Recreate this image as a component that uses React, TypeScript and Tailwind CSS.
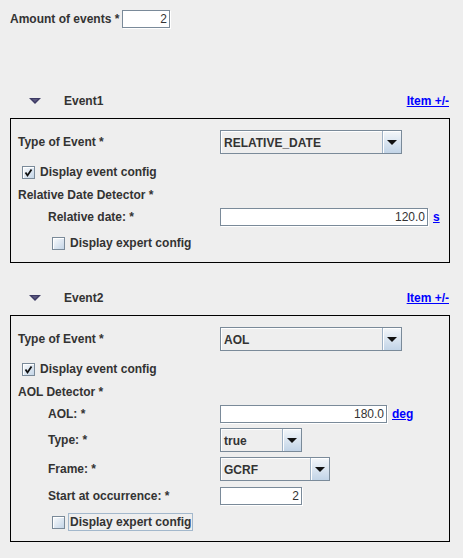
import React from 'react';

function TextField({ className, value }: { className: string; value: string }) {
  return (
    <div
      className={`flex h-[18px] items-center justify-end border border-[#7a8a99] bg-white pr-[2px] font-normal shadow-[1px_1px_0_#ffffff] ${className}`}
    >
      {value}
    </div>
  );
}

function Combo({ className, value }: { className: string; value: string }) {
  return (
    <div className={`flex h-[24px] border border-[#7a8a99] ${className}`}>
      <div className="flex flex-1 items-center border-t border-l border-white bg-[#eeeeee] pl-[2px]">
        {value}
      </div>
      <div className="flex w-[19px] items-center justify-center border-l border-[#9eb1c5] bg-gradient-to-b from-[#f4f7fa] to-[#c2d4e7] shadow-[inset_1px_1px_0_#ffffff]">
        <svg width="10" height="5" viewBox="0 0 10 5">
          <polygon points="0,0 10,0 5,5" fill="#111111" />
        </svg>
      </div>
    </div>
  );
}

function CheckBox({ checked }: { checked?: boolean }) {
  return (
    <div className="flex h-[13px] w-[13px] items-center justify-center border border-[#7a8a99] bg-gradient-to-br from-[#fbfcfd] to-[#c4d5e7] shadow-[inset_1px_1px_0_#ffffff]">
      {checked && (
        <svg width="11" height="11" viewBox="0 0 11 11">
          <path d="M2.5 5.5 L4.5 8.5 L8.5 2.5" stroke="#111111" strokeWidth="1.8" fill="none" />
        </svg>
      )}
    </div>
  );
}

function Header({ title }: { title: string }) {
  return (
    <div className="flex h-[18px] items-center pr-[14px]">
      <div className="ml-[29px] flex w-[35px]">
        <svg width="12" height="6" viewBox="0 0 12 6">
          <polygon points="0,0 12,0 6,6" fill="#3d3a64" />
          <polygon points="3,1 9,1 6,4" fill="#5a577f" />
        </svg>
      </div>
      <span>{title}</span>
      <span className="ml-auto text-[#0000ff] underline">Item +/-</span>
    </div>
  );
}

function Row({
  label,
  indent,
  height,
  className = '',
  children,
}: {
  label: string;
  indent?: boolean;
  height: string;
  className?: string;
  children?: React.ReactNode;
}) {
  return (
    <div className={`flex items-center pl-[7px] ${height} ${className}`}>
      <div className={`w-[202px] ${indent ? 'pl-[30px]' : ''}`}>{label}</div>
      {children}
    </div>
  );
}

function CheckRow({
  label,
  checked,
  indent,
  focused,
}: {
  label: string;
  checked?: boolean;
  indent?: boolean;
  focused?: boolean;
}) {
  return (
    <div className={`flex h-[20px] items-center ${indent ? 'pl-[41px]' : 'pl-[11px]'}`}>
      <CheckBox checked={checked} />
      <span
        className={`ml-[3px] border px-[1px] leading-[16px] ${
          focused ? 'border-[#a3b8cc]' : 'border-transparent'
        }`}
      >
        {label}
      </span>
    </div>
  );
}

export default function App() {
  return (
    <div className="h-[558px] w-[463px] overflow-hidden bg-[#eeeeee] font-['Liberation_Sans',Arial,sans-serif] text-[12px] font-bold text-[#333333]">
      <div className="flex items-center pt-[10px] pl-[10px]">
        <span className="w-[112px]">Amount of events *</span>
        <TextField className="w-[48px]" value="2" />
      </div>

      <div className="mt-[64px]">
        <Header title="Event1" />
      </div>
      <div className="mx-[10px] mt-[8px] w-[440px] border border-black pb-[9px]">
        <Row label="Type of Event *" height="h-[24px]" className="mt-[11px]">
          <Combo className="w-[182px]" value="RELATIVE_DATE" />
        </Row>
        <div className="mt-[7px] flex h-[22px] items-center">
          <CheckRow label="Display event config" checked />
        </div>
        <Row label="Relative Date Detector *" height="h-[24px]" />
        <Row label="Relative date: *" indent height="h-[19px]">
          <TextField className="w-[208px]" value="120.0" />
          <span className="ml-[5px] text-[#0000ff] underline">s</span>
        </Row>
        <div className="mt-[7px]">
          <CheckRow label="Display expert config" indent />
        </div>
      </div>

      <div className="mt-[26px]">
        <Header title="Event2" />
      </div>
      <div className="mx-[10px] mt-[8px] w-[440px] border border-black pb-[9px]">
        <Row label="Type of Event *" height="h-[24px]" className="mt-[11px]">
          <Combo className="w-[182px]" value="AOL" />
        </Row>
        <div className="mt-[7px] flex h-[22px] items-center">
          <CheckRow label="Display event config" checked />
        </div>
        <Row label="AOL Detector *" height="h-[24px]" />
        <Row label="AOL: *" indent height="h-[19px]">
          <TextField className="w-[167px]" value="180.0" />
          <span className="ml-[5px] text-[#0000ff] underline">deg</span>
        </Row>
        <Row label="Type: *" indent height="h-[24px]" className="mt-[5px]">
          <Combo className="w-[82px]" value="true" />
        </Row>
        <Row label="Frame: *" indent height="h-[24px]" className="mt-[5px]">
          <Combo className="w-[110px]" value="GCRF" />
        </Row>
        <Row label="Start at occurrence: *" indent height="h-[19px]" className="mt-[5px]">
          <TextField className="w-[82px]" value="2" />
        </Row>
        <div className="mt-[7px]">
          <CheckRow label="Display expert config" indent focused />
        </div>
      </div>
    </div>
  );
}
